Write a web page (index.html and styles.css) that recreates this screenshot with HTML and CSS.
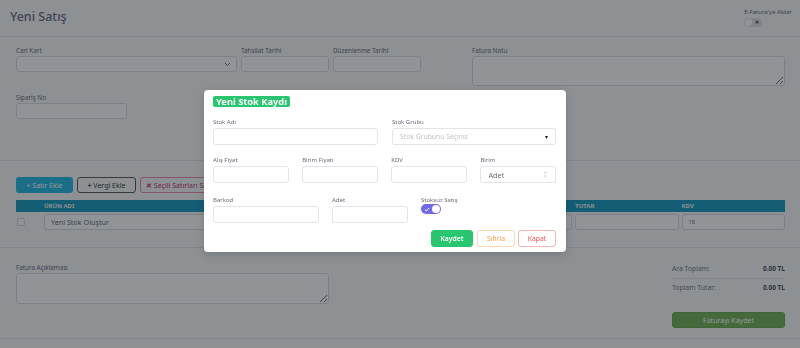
FILE: index.html
```html
<!DOCTYPE html>
<html lang="tr">
<head>
    <meta charset="UTF-8">
    <meta name="viewport" content="width=device-width, initial-scale=1.0">
    <title>Yeni Satış</title>
    <link rel="stylesheet" href="styles.css">
</head>
<body>
    <div class="page">
        <header class="page-head">
            <h1>Yeni Satış</h1>
            <div class="efatura">
                <span>E-Fatura'ya Aktar</span>
                <span class="switch-off"><span class="knob"></span><span class="cross">&#10005;</span></span>
            </div>
        </header>

        <section class="form-top">
            <div class="row-one">
                <div class="field">
                    <label>Cari Kart</label>
                    <div class="input select-box">
                        <svg width="7" height="5" viewBox="0 0 7 5"><path d="M1 1l2.5 2.5L6 1" fill="none" stroke="#6e6b7b" stroke-width="1"/></svg>
                    </div>
                </div>
                <div class="field">
                    <label>Tahsilat Tarihi</label>
                    <div class="input"></div>
                </div>
                <div class="field">
                    <label>Düzenlenme Tarihi</label>
                    <div class="input"></div>
                </div>
                <div class="field note">
                    <label>Fatura Notu</label>
                    <textarea class="area note-area"></textarea>
                </div>
            </div>
            <div class="field order-no">
                <label>Sipariş No</label>
                <div class="input"></div>
            </div>
        </section>

        <section class="lines">
            <div class="actions">
                <button class="btn btn-info">+ Satır Ekle</button>
                <button class="btn btn-dark-outline"><b>+</b> Vergi Ekle</button>
                <button class="btn btn-pink-outline"><b>&#10005;</b> Seçili Satırları Sil</button>
            </div>
            <div class="grid-row table-head">
                <span></span>
                <span>ÜRÜN ADI</span>
                <span>MİKTAR</span>
                <span>BİRİM</span>
                <span>BİRİM FİYAT</span>
                <span>TUTAR</span>
                <span>KDV</span>
            </div>
            <div class="grid-row table-row">
                <span class="check"></span>
                <div class="input cell">Yeni Stok Oluştur</div>
                <div class="input cell"></div>
                <div class="input cell"></div>
                <div class="input cell"></div>
                <div class="input cell"></div>
                <div class="input cell small">18</div>
            </div>
        </section>

        <section class="bottom">
            <div class="field desc">
                <label>Fatura Açıklaması</label>
                <textarea class="area desc-area"></textarea>
            </div>
            <div class="totals">
                <div class="sum-row"><span>Ara Toplam:</span><b>0.00 TL</b></div>
                <div class="sum-row"><span>Toplam Tutar:</span><b>0.00 TL</b></div>
                <button class="btn-save">Faturayı Kaydet</button>
            </div>
        </section>
    </div>

    <div class="overlay">
        <div class="modal">
            <div class="badge">Yeni Stok Kaydı</div>

            <div class="m-grid two">
                <div class="m-field">
                    <label>Stok Adı</label>
                    <div class="m-input"></div>
                </div>
                <div class="m-field">
                    <label>Stok Grubu</label>
                    <div class="m-input m-select placeholder">
                        <span>Stok Grubunu Seçiniz</span>
                        <span class="caret">&#9662;</span>
                    </div>
                </div>
            </div>

            <div class="m-grid four">
                <div class="m-field">
                    <label>Alış Fiyat</label>
                    <div class="m-input"></div>
                </div>
                <div class="m-field">
                    <label>Birim Fiyatı</label>
                    <div class="m-input"></div>
                </div>
                <div class="m-field">
                    <label>KDV</label>
                    <div class="m-input"></div>
                </div>
                <div class="m-field">
                    <label>Birim</label>
                    <div class="m-input m-select">
                        <span>Adet</span>
                        <svg width="5" height="7" viewBox="0 0 5 7"><path d="M1 2.6L2.5 1.2 4 2.6M1 4.4l1.5 1.4L4 4.4" fill="none" stroke="#b9b9c3" stroke-width="0.8"/></svg>
                    </div>
                </div>
            </div>

            <div class="m-grid three">
                <div class="m-field">
                    <label>Barkod</label>
                    <div class="m-input"></div>
                </div>
                <div class="m-field">
                    <label>Adet</label>
                    <div class="m-input"></div>
                </div>
                <div class="m-field">
                    <label>Stoksuz Satış</label>
                    <span class="switch-on">
                        <svg width="6" height="5" viewBox="0 0 6 5"><path d="M0.8 2.6l1.5 1.4L5.2 1" fill="none" stroke="#fff" stroke-width="1"/></svg>
                        <span class="knob"></span>
                    </span>
                </div>
            </div>

            <div class="m-actions">
                <button class="m-btn m-save">Kaydet</button>
                <button class="m-btn m-reset">Sıfırla</button>
                <button class="m-btn m-close">Kapat</button>
            </div>
        </div>
    </div>
</body>
</html>
```

FILE: styles.css
```css
* {
    box-sizing: border-box;
}

body {
    margin: 0;
    font-family: "Noto Sans", "Open Sans", sans-serif;
    background-color: #f8f8f8;
    color: #5e5873;
    height: 348px;
    overflow: hidden;
}

.page {
    background-color: #f8f8f8;
    height: 348px;
}

.page-head {
    height: 37px;
    display: flex;
    justify-content: space-between;
    align-items: center;
    padding: 0 8px 0 10px;
    border-bottom: 1px solid #e2e0e8;
}

.page-head h1 {
    margin: 0 0 3px;
    font-size: 12.5px;
    font-weight: 500;
    color: #5e5873;
}

.efatura {
    display: flex;
    flex-direction: column;
    align-items: flex-start;
    gap: 2px;
    font-size: 6px;
    line-height: 7px;
    color: #5e5873;
    margin-top: -1px;
}

.switch-off {
    width: 18px;
    height: 9px;
    border-radius: 5px;
    background-color: #dedde3;
    display: flex;
    align-items: center;
    justify-content: space-between;
    padding: 0 3px 0 1px;
}

.switch-off .knob {
    width: 7px;
    height: 7px;
    border-radius: 50%;
    background-color: #fff;
}

.switch-off .cross {
    font-size: 5px;
    font-weight: 700;
    color: #222;
}

.field label {
    display: block;
    font-size: 6.3px;
    line-height: 8px;
    margin-bottom: 1px;
    color: #5e5873;
}

.input {
    height: 16px;
    border: 1px solid #d8d6de;
    border-radius: 3px;
    background-color: #fff;
}

.area {
    display: block;
    width: 100%;
    border: 1px solid #d8d6de;
    border-radius: 3px;
    background-color: #fff;
    resize: vertical;
    margin: 0;
    font: inherit;
}

.form-top {
    height: 124px;
    padding: 10px 16px 0;
    border-bottom: 1px solid #e2e0e8;
}

.row-one {
    display: grid;
    grid-template-columns: 221px 88px 88px 1fr;
    column-gap: 4px;
}

.note {
    margin-left: 47px;
    margin-right: -1px;
}

.note-area {
    height: 30px;
}

.select-box {
    display: flex;
    align-items: center;
    justify-content: flex-end;
    padding-right: 5px;
}

.order-no {
    width: 111px;
    margin-top: 8px;
}

.lines {
    height: 87px;
    padding: 16px 15px 0 16px;
    border-bottom: 1px solid #e2e0e8;
}

.actions {
    display: flex;
    gap: 4px;
    margin-bottom: 7px;
}

.btn {
    height: 16px;
    padding: 0 8px;
    font-family: inherit;
    font-size: 7px;
    border-radius: 3px;
    border: 1px solid transparent;
    background: none;
    white-space: nowrap;
}

.btn-info {
    background-color: #12b2de;
    color: #fff;
    width: 57px;
    padding: 0;
}

.btn-dark-outline {
    border-color: #4b4b4b;
    color: #2e2e2e;
    width: 59px;
    padding: 0;
}

.btn-pink-outline {
    border-color: #f07aa6;
    color: #c0166a;
    padding: 0 5px;
}

.grid-row {
    display: grid;
    grid-template-columns: 25px 209px repeat(5, 1fr);
    column-gap: 3px;
}

.table-head {
    height: 12px;
    background-color: #0592bb;
    align-items: center;
    font-size: 6px;
    font-weight: 700;
    color: #f0f0f0;
    margin-bottom: 2px;
}

.table-row {
    align-items: center;
}

.check {
    width: 8px;
    height: 8px;
    border: 1px solid #d0ced6;
    border-radius: 2px;
    margin-left: 1px;
    background-color: #fff;
}

.cell {
    font-size: 7.2px;
    line-height: 14px;
    padding-left: 6px;
    color: #5e5873;
}

.cell.small {
    font-size: 5.5px;
}

.bottom {
    height: 91px;
    padding: 16px 15px 0 16px;
    display: flex;
    justify-content: space-between;
    border-bottom: 1px solid #e2e0e8;
}

.desc {
    width: 313px;
}

.desc-area {
    height: 31px;
}

.totals {
    width: 113px;
    margin-top: -5px;
}

.sum-row {
    display: flex;
    justify-content: space-between;
    font-size: 6.8px;
    line-height: 9px;
    padding: 5px 0;
    border-bottom: 1px solid #e2e0e8;
    color: #6e6b7b;
}

.sum-row:last-of-type {
    border-bottom: none;
    padding: 4px 0 4px;
}

.sum-row b {
    color: #3f3d4a;
    font-size: 6.5px;
}

.btn-save {
    margin-top: 16px;
    width: 100%;
    height: 16px;
    border: 1px solid #5f9c40;
    border-radius: 3px;
    background-color: #68a845;
    color: #fff;
    font-family: inherit;
    font-size: 7px;
}

.overlay {
    position: fixed;
    inset: 0;
    background-color: rgba(34, 41, 47, 0.5);
}

.modal {
    position: absolute;
    left: 204px;
    top: 90px;
    width: 362px;
    height: 162px;
    background-color: #fff;
    border-radius: 4px;
    box-shadow: 0 3px 8px rgba(0, 0, 0, 0.15);
    padding: 6px 10px 5px 9px;
}

.badge {
    width: max-content;
    background-color: #28c76f;
    color: #fff;
    font-size: 9.3px;
    font-weight: 700;
    line-height: 11px;
    padding: 0 3px;
    border-radius: 2px;
}

.m-grid {
    display: grid;
    column-gap: 13px;
}

.m-grid.two {
    grid-template-columns: 165px 1fr;
    column-gap: 14px;
    margin-top: 11px;
}

.m-grid.four {
    grid-template-columns: repeat(4, 1fr);
    column-gap: 13.5px;
    margin-top: 11px;
}

.m-grid.three {
    grid-template-columns: 106px 76px 1fr;
    margin-top: 13px;
}

.m-field label {
    display: block;
    font-size: 6px;
    line-height: 9px;
    margin-bottom: 1px;
    color: #6e6b7b;
}

.m-input {
    height: 17px;
    border: 1px solid #e4e3e8;
    border-radius: 3px;
}

.m-select {
    display: flex;
    align-items: center;
    justify-content: space-between;
    padding: 0 7px 0 7px;
    font-size: 7.3px;
    color: #6e6b7b;
}

.m-select.placeholder {
    font-size: 6.8px;
    color: #c2c1c9;
}

.caret {
    color: #222;
    font-size: 6px;
}

.switch-on {
    display: flex;
    align-items: center;
    justify-content: space-between;
    width: 20px;
    height: 10px;
    border-radius: 5px;
    background-color: #7367f0;
    padding: 0 1px 0 3px;
    margin-top: -2px;
}

.switch-on .knob {
    width: 8px;
    height: 8px;
    border-radius: 50%;
    background-color: #fff;
}

.m-actions {
    display: flex;
    justify-content: flex-end;
    gap: 4px;
    margin-top: 7px;
}

.m-btn {
    height: 17px;
    font-family: inherit;
    font-size: 6.8px;
    border-radius: 3px;
    border: 1px solid transparent;
    background-color: #fff;
    padding: 0;
}

.m-save {
    width: 42px;
    background-color: #28c76f;
    border-color: #28c76f;
    color: #fff;
    font-weight: 600;
}

.m-reset {
    width: 38px;
    border-color: #ffd8b4;
    color: #ff9f43;
}

.m-close {
    width: 38px;
    border-color: #f3b5b6;
    color: #ea5455;
    margin-left: -1px;
}
```
